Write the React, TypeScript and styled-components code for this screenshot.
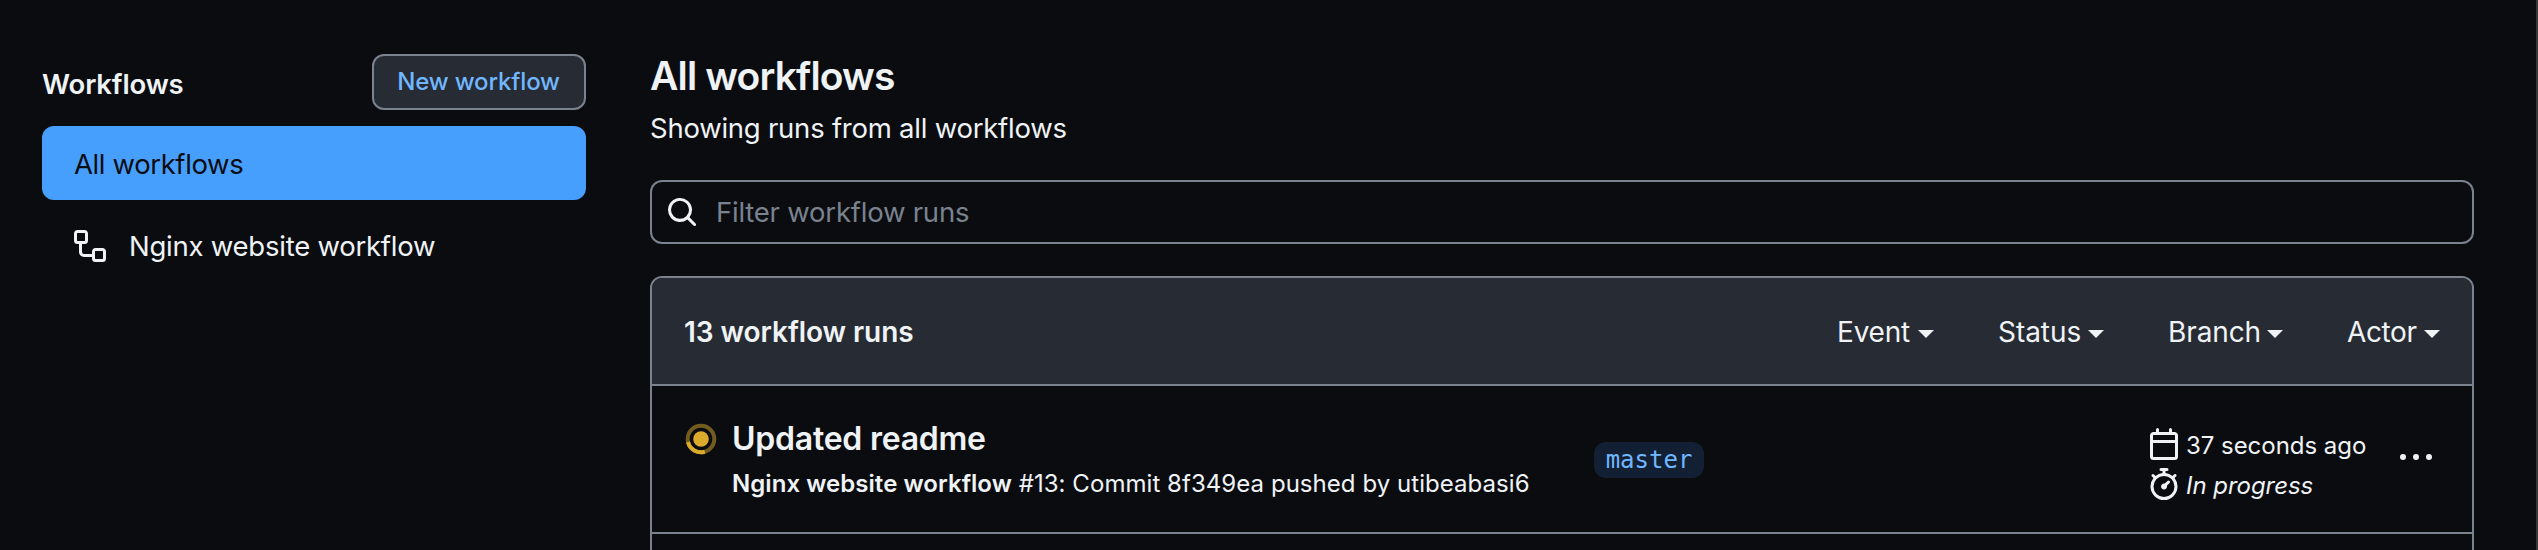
import React from 'react';
import styled, { createGlobalStyle } from 'styled-components';

const color = {
  canvas: '#0a0c10',
  subtle: '#272b33',
  border: '#7a828e',
  text: '#f0f3f6',
  muted: '#7a828e',
  link: '#71b7ff',
  accent: '#479ffd',
  accentSubtle: '#132033',
  attention: '#dcab2c',
};

const GlobalStyle = createGlobalStyle`
  * { box-sizing: border-box; }
  body {
    margin: 0;
    overflow: hidden;
    background: ${color.canvas};
    color: ${color.text};
    font: 400 28px/42px Inter, "Liberation Sans", sans-serif;
  }
`;

const Page = styled.div`
  display: flex;
  height: 550px;
  overflow: hidden;
  border-right: 2px solid #37383a;
`;

const Sidebar = styled.aside`
  width: 586px;
  flex: none;
  padding: 54px 0 0 42px;
`;

const SidebarHeader = styled.div`
  display: flex;
  justify-content: space-between;
  height: 56px;
  margin-bottom: 16px;
`;

const SidebarTitle = styled.h2`
  margin: 9px 0 0;
  font-size: 27.5px;
  font-weight: 600;
  line-height: 42px;
  letter-spacing: -0.14px;
`;

const NewButton = styled.button`
  width: 214px;
  height: 56px;
  padding: 0 1px 1px 0;
  border: 2px solid ${color.border};
  border-radius: 12px;
  background: ${color.subtle};
  color: ${color.link};
  font: 500 24px/40px Inter, sans-serif;
  letter-spacing: -0.14px;
`;

const NavItem = styled.a<{ $active?: boolean; $track: string }>`
  display: flex;
  align-items: center;
  gap: 23px;
  height: 74px;
  margin-bottom: 9px;
  padding: ${p => (p.$active ? '2px 32px 0' : '0 32px')};
  border-radius: 12px;
  background: ${p => (p.$active ? color.accent : 'transparent')};
  color: ${p => (p.$active ? color.canvas : color.text)};
  font-size: 27.5px;
  letter-spacing: ${p => p.$track};
  white-space: nowrap;
`;

const Main = styled.main`
  width: 1824px;
  margin-left: 64px;
  padding-top: 45px;
`;

const Title = styled.h1`
  margin: 0;
  font-size: 39px;
  font-weight: 600;
  line-height: 61px;
  letter-spacing: -0.84px;
`;

const Subtitle = styled.p`
  margin: 1px 0 31px;
  font-size: 27.5px;
  line-height: 42px;
  letter-spacing: -0.24px;
`;

const SearchBox = styled.div`
  display: flex;
  align-items: center;
  gap: 18px;
  height: 64px;
  margin-bottom: 32px;
  padding-left: 14px;
  border: 2px solid ${color.border};
  border-radius: 12px;
  color: ${color.text};
`;

const SearchInput = styled.input`
  flex: 1;
  height: 56px;
  padding: 0;
  border: 0;
  outline: 0;
  background: transparent;
  color: ${color.text};
  font: inherit;
  font-size: 27.5px;
  letter-spacing: -0.22px;
  &::placeholder { color: ${color.muted}; opacity: 1; }
`;

const RunTable = styled.section`
  height: 400px;
  border: 2px solid ${color.border};
  border-radius: 12px;
  overflow: hidden;
`;

const TableHeader = styled.header`
  display: flex;
  align-items: center;
  justify-content: space-between;
  height: 108px;
  padding: 2px 32px 0;
  border-bottom: 2px solid ${color.border};
  background: ${color.subtle};
`;

const RunCount = styled.strong`
  font-weight: 600;
  letter-spacing: -0.06px;
`;

const Filters = styled.div`
  display: flex;
  gap: 64px;
`;

const Filter = styled.div<{ $width: number; $track: number }>`
  display: flex;
  align-items: center;
  justify-content: space-between;
  width: ${p => p.$width}px;
  letter-spacing: ${p => p.$track}px;
`;

const Caret = styled.span`
  margin-top: 3px;
  border: 8px solid transparent;
  border-top-color: ${color.text};
  border-bottom-width: 0;
`;

const Row = styled.article`
  display: grid;
  grid-template-columns: 47.5px 862px 1fr 252px 72px;
  align-items: start;
  height: 148px;
  padding-left: 32.5px;
  border-bottom: 2px solid ${color.border};
`;

const StatusCell = styled.div`
  display: flex;
  padding-top: 37px;
`;

const RunInfo = styled.div`
  padding-top: 32px;
  white-space: nowrap;
`;

const RunTitle = styled.h3`
  margin: 0 0 5px;
  font-size: 32px;
  font-weight: 600;
  line-height: 41px;
  letter-spacing: -0.24px;
`;

const RunMeta = styled.p`
  margin: 0;
  font-size: 24px;
  line-height: 39px;
  letter-spacing: 0.05px;
`;

const WorkflowName = styled.strong`
  font-weight: 600;
`;

const Branch = styled.span`
  display: flex;
  justify-content: center;
  width: 110px;
  height: 36px;
  margin-top: 56px;
  border-radius: 12px;
  background: ${color.accentSubtle};
  color: ${color.link};
  font: 24px/36px "DejaVu Sans Mono", monospace;
`;

const Times = styled.div`
  padding-top: 38px;
  font-size: 24px;
  white-space: nowrap;
`;

const TimeLine = styled.div<{ $italic?: boolean }>`
  display: flex;
  align-items: center;
  gap: 6px;
  height: 40px;
  line-height: 37px;
  font-style: ${p => (p.$italic ? 'italic' : 'normal')};
  letter-spacing: -0.04px;
`;

const TimeText = styled.span`
  padding-top: 3px;
`;

const MenuButton = styled.div`
  display: flex;
  padding-top: 56px;
`;

const Icon = styled.svg`
  flex: none;
  width: 32px;
  height: 32px;
`;

const Octicon = ({ d }: { d: string }) => (
  <Icon viewBox="0 0 16 16" fill="currentColor">
    <path d={d} />
  </Icon>
);

const icons = {
  workflow:
    'M0 1.75C0 .784.784 0 1.75 0h3.5C6.216 0 7 .784 7 1.75v3.5A1.75 1.75 0 0 1 5.25 7H4v4a1 1 0 0 0 1 1h4v-1.25C9 9.784 9.784 9 10.75 9h3.5c.966 0 1.75.784 1.75 1.75v3.5A1.75 1.75 0 0 1 14.25 16h-3.5A1.75 1.75 0 0 1 9 14.25v-.75H5A2.5 2.5 0 0 1 2.5 11V7h-.75A1.75 1.75 0 0 1 0 5.25Zm1.75-.25a.25.25 0 0 0-.25.25v3.5c0 .138.112.25.25.25h3.5a.25.25 0 0 0 .25-.25v-3.5a.25.25 0 0 0-.25-.25Zm9 9a.25.25 0 0 0-.25.25v3.5c0 .138.112.25.25.25h3.5a.25.25 0 0 0 .25-.25v-3.5a.25.25 0 0 0-.25-.25Z',
  search:
    'M10.68 11.74a6 6 0 0 1-7.922-8.982 6 6 0 0 1 8.982 7.922l3.04 3.04a.749.749 0 0 1-.326 1.275.749.749 0 0 1-.734-.215ZM11.5 7a4.499 4.499 0 1 0-8.997 0A4.499 4.499 0 0 0 11.5 7Z',
  calendar:
    'M4.75 0a.75.75 0 0 1 .75.75V2h5V.75a.75.75 0 0 1 1.5 0V2h1.25c.966 0 1.75.784 1.75 1.75v10.5A1.75 1.75 0 0 1 13.25 16H2.75A1.75 1.75 0 0 1 1 14.25V3.75C1 2.784 1.784 2 2.75 2H4V.75A.75.75 0 0 1 4.75 0ZM2.5 7.5v6.75c0 .138.112.25.25.25h10.5a.25.25 0 0 0 .25-.25V7.5Zm10.75-4H2.75a.25.25 0 0 0-.25.25V6h11V3.75a.25.25 0 0 0-.25-.25Z',
  stopwatch:
    'M5.75.75A.75.75 0 0 1 6.5 0h3a.75.75 0 0 1 0 1.5h-.75v1l-.001.041a6.724 6.724 0 0 1 3.464 1.435l.007-.006.75-.75a.749.749 0 0 1 1.275.326.749.749 0 0 1-.215.734l-.75.75-.006.007a6.75 6.75 0 1 1-10.548 0L2.72 5.03l-.75-.75a.751.751 0 0 1 .018-1.042.751.751 0 0 1 1.042-.018l.75.75.007.006A6.72 6.72 0 0 1 7.25 2.541V1.5H6.5a.75.75 0 0 1-.75-.75ZM8 14.5a5.25 5.25 0 1 0-.001-10.501A5.25 5.25 0 0 0 8 14.5Zm.389-6.7 1.33-1.33a.75.75 0 1 1 1.061 1.06L9.45 8.861A1.503 1.503 0 0 1 8 10.75a1.499 1.499 0 1 1 .389-2.95Z',
  kebab:
    'M8 9a1.5 1.5 0 1 0 0-3 1.5 1.5 0 0 0 0 3ZM1.5 9a1.5 1.5 0 1 0 0-3 1.5 1.5 0 0 0 0 3Zm13 0a1.5 1.5 0 1 0 0-3 1.5 1.5 0 0 0 0 3Z',
};

const InProgressIcon = () => (
  <Icon viewBox="0 0 32 32" fill="none">
    <circle cx="16" cy="16" r="13.3" stroke={color.attention} strokeOpacity="0.5" strokeWidth="4" />
    <circle cx="16" cy="16" r="7.8" fill={color.attention} />
    <path d="M3.04 19A13.3 13.3 0 0 0 19.8 28.75" stroke={color.attention} strokeWidth="4" />
  </Icon>
);

const filters = [
  { label: 'Event', width: 97, track: -0.2 },
  { label: 'Status', width: 106, track: -0.05 },
  { label: 'Branch', width: 115, track: -0.1 },
  { label: 'Actor', width: 93, track: -0.4 },
];

export default function App() {
  return (
    <>
      <GlobalStyle />
      <Page>
        <Sidebar>
          <SidebarHeader>
            <SidebarTitle>Workflows</SidebarTitle>
            <NewButton>New workflow</NewButton>
          </SidebarHeader>
          <nav>
            <NavItem $active $track="-0.38px">All workflows</NavItem>
            <NavItem $track="-0.24px">
              <Octicon d={icons.workflow} />
              Nginx website workflow
            </NavItem>
          </nav>
        </Sidebar>
        <Main>
          <Title>All workflows</Title>
          <Subtitle>Showing runs from all workflows</Subtitle>
          <SearchBox>
            <Octicon d={icons.search} />
            <SearchInput placeholder="Filter workflow runs" />
          </SearchBox>
          <RunTable>
            <TableHeader>
              <RunCount>13 workflow runs</RunCount>
              <Filters>
                {filters.map(f => (
                  <Filter key={f.label} $width={f.width} $track={f.track}>
                    {f.label}
                    <Caret />
                  </Filter>
                ))}
              </Filters>
            </TableHeader>
            <Row>
              <StatusCell>
                <InProgressIcon />
              </StatusCell>
              <RunInfo>
                <RunTitle>Updated readme</RunTitle>
                <RunMeta>
                  <WorkflowName>Nginx website workflow</WorkflowName> #13: Commit 8f349ea pushed by utibeabasi6
                </RunMeta>
              </RunInfo>
              <Branch>master</Branch>
              <Times>
                <TimeLine>
                  <Octicon d={icons.calendar} />
                  <TimeText>37 seconds ago</TimeText>
                </TimeLine>
                <TimeLine $italic>
                  <Octicon d={icons.stopwatch} />
                  <TimeText>In progress</TimeText>
                </TimeLine>
              </Times>
              <MenuButton>
                <Octicon d={icons.kebab} />
              </MenuButton>
            </Row>
          </RunTable>
        </Main>
      </Page>
    </>
  );
}
